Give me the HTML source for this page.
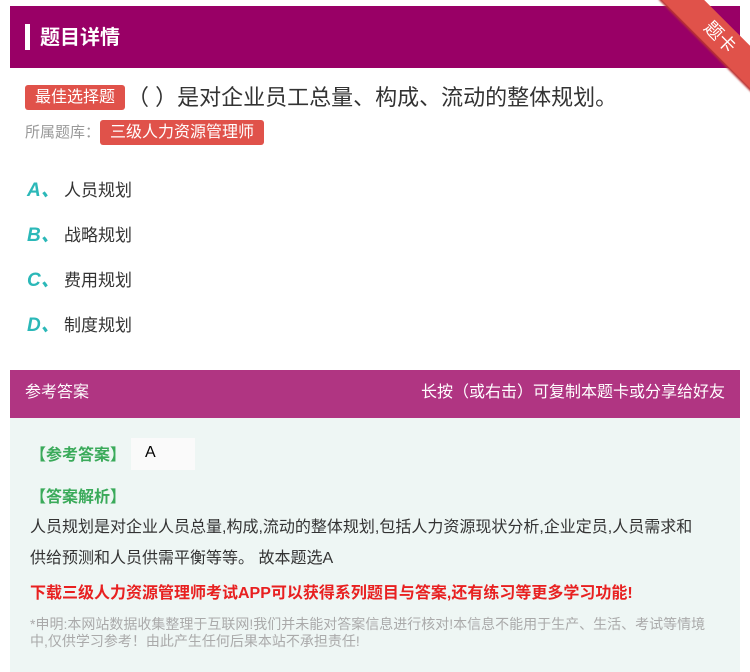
<!DOCTYPE html>
<html><head><meta charset="utf-8"><style>
body{margin:0;width:750px;height:672px;overflow:hidden;background:#fff;font-family:"Liberation Sans","Noto Sans CJK SC",sans-serif;position:relative}
.hd{position:absolute;left:10px;top:6px;width:730px;height:62px;background:#990066}
.hd .bar{position:absolute;left:15px;top:18px;width:5px;height:26px;background:#fff}
.hd .t{position:absolute;left:30px;top:15px;color:#fff;font-size:20px;font-weight:bold}
.rib{position:absolute;width:140px;height:30px;background:#e0524a;transform:rotate(45deg);color:#fff;text-align:center;font-size:18px;line-height:30px;box-shadow:0 2px 2px #b33}
.tag{display:inline-block;background:#e0524a;color:#fff;border-radius:3px;padding:0 10px;font-size:16px;height:25px;line-height:25px}
.opt{position:absolute;left:27px;font-size:17px;color:#333}
.opt b{display:inline-block;width:37px;color:#2bb8b8;font-style:italic;font-size:19px}
.ah{position:absolute;left:10px;top:370px;width:730px;height:48px;background:#b03582;color:#fff;font-size:16px;line-height:46px}
.ab{position:absolute;left:10px;top:418px;width:730px;height:254px;background:#eef6f4}
</style></head><body>
<div class="hd"><div class="bar"></div><div class="t">题目详情</div></div>
<div style="position:absolute;right:0;top:0;width:100px;height:100px;overflow:hidden"><div class="rib" style="right:-40px;top:22px">题卡</div></div>
<div style="position:absolute;left:25px;top:80px;font-size:22px;color:#333"><span class="tag" style="vertical-align:3px;margin-right:2px">最佳选择题</span>（ ）是对企业员工总量、构成、流动的整体规划。</div>
<div style="position:absolute;left:25px;top:120px;font-size:15px;color:#999">所属题库：<span class="tag">三级人力资源管理师</span></div>
<div class="opt" style="top:175px"><b>A、</b>人员规划</div>
<div class="opt" style="top:220px"><b>B、</b>战略规划</div>
<div class="opt" style="top:265px"><b>C、</b>费用规划</div>
<div class="opt" style="top:310px"><b>D、</b>制度规划</div>
<div class="ah"><span style="position:absolute;left:15px">参考答案</span><span style="position:absolute;right:15px">长按（或右击）可复制本题卡或分享给好友</span></div>
<div class="ab"></div>
<div style="position:absolute;left:30px;top:441px;color:#3aaa5a;font-size:16px;font-weight:bold">【参考答案】</div>
<div style="position:absolute;left:131px;top:438px;width:64px;height:32px;background:#fafafa;font-size:16px;line-height:30px;text-indent:14px">A</div>
<div style="position:absolute;left:30px;top:483px;color:#3aaa5a;font-size:16px;font-weight:bold">【答案解析】</div>
<div style="position:absolute;left:30px;top:512px;width:670px;color:#333;font-size:16px;line-height:31px">人员规划是对企业人员总量,构成,流动的整体规划,包括人力资源现状分析,企业定员,人员需求和供给预测和人员供需平衡等等。 故本题选A</div>
<div style="position:absolute;left:30px;top:579px;color:#e82020;font-size:16px;font-weight:bold">下载三级人力资源管理师考试APP可以获得系列题目与答案,还有练习等更多学习功能!</div>
<div style="position:absolute;left:30px;top:616px;width:690px;color:#aaa;font-size:14px;line-height:17px">*申明:本网站数据收集整理于互联网!我们并未能对答案信息进行核对!本信息不能用于生产、生活、考试等情境中,仅供学习参考！由此产生任何后果本站不承担责任!</div>
</body></html>
